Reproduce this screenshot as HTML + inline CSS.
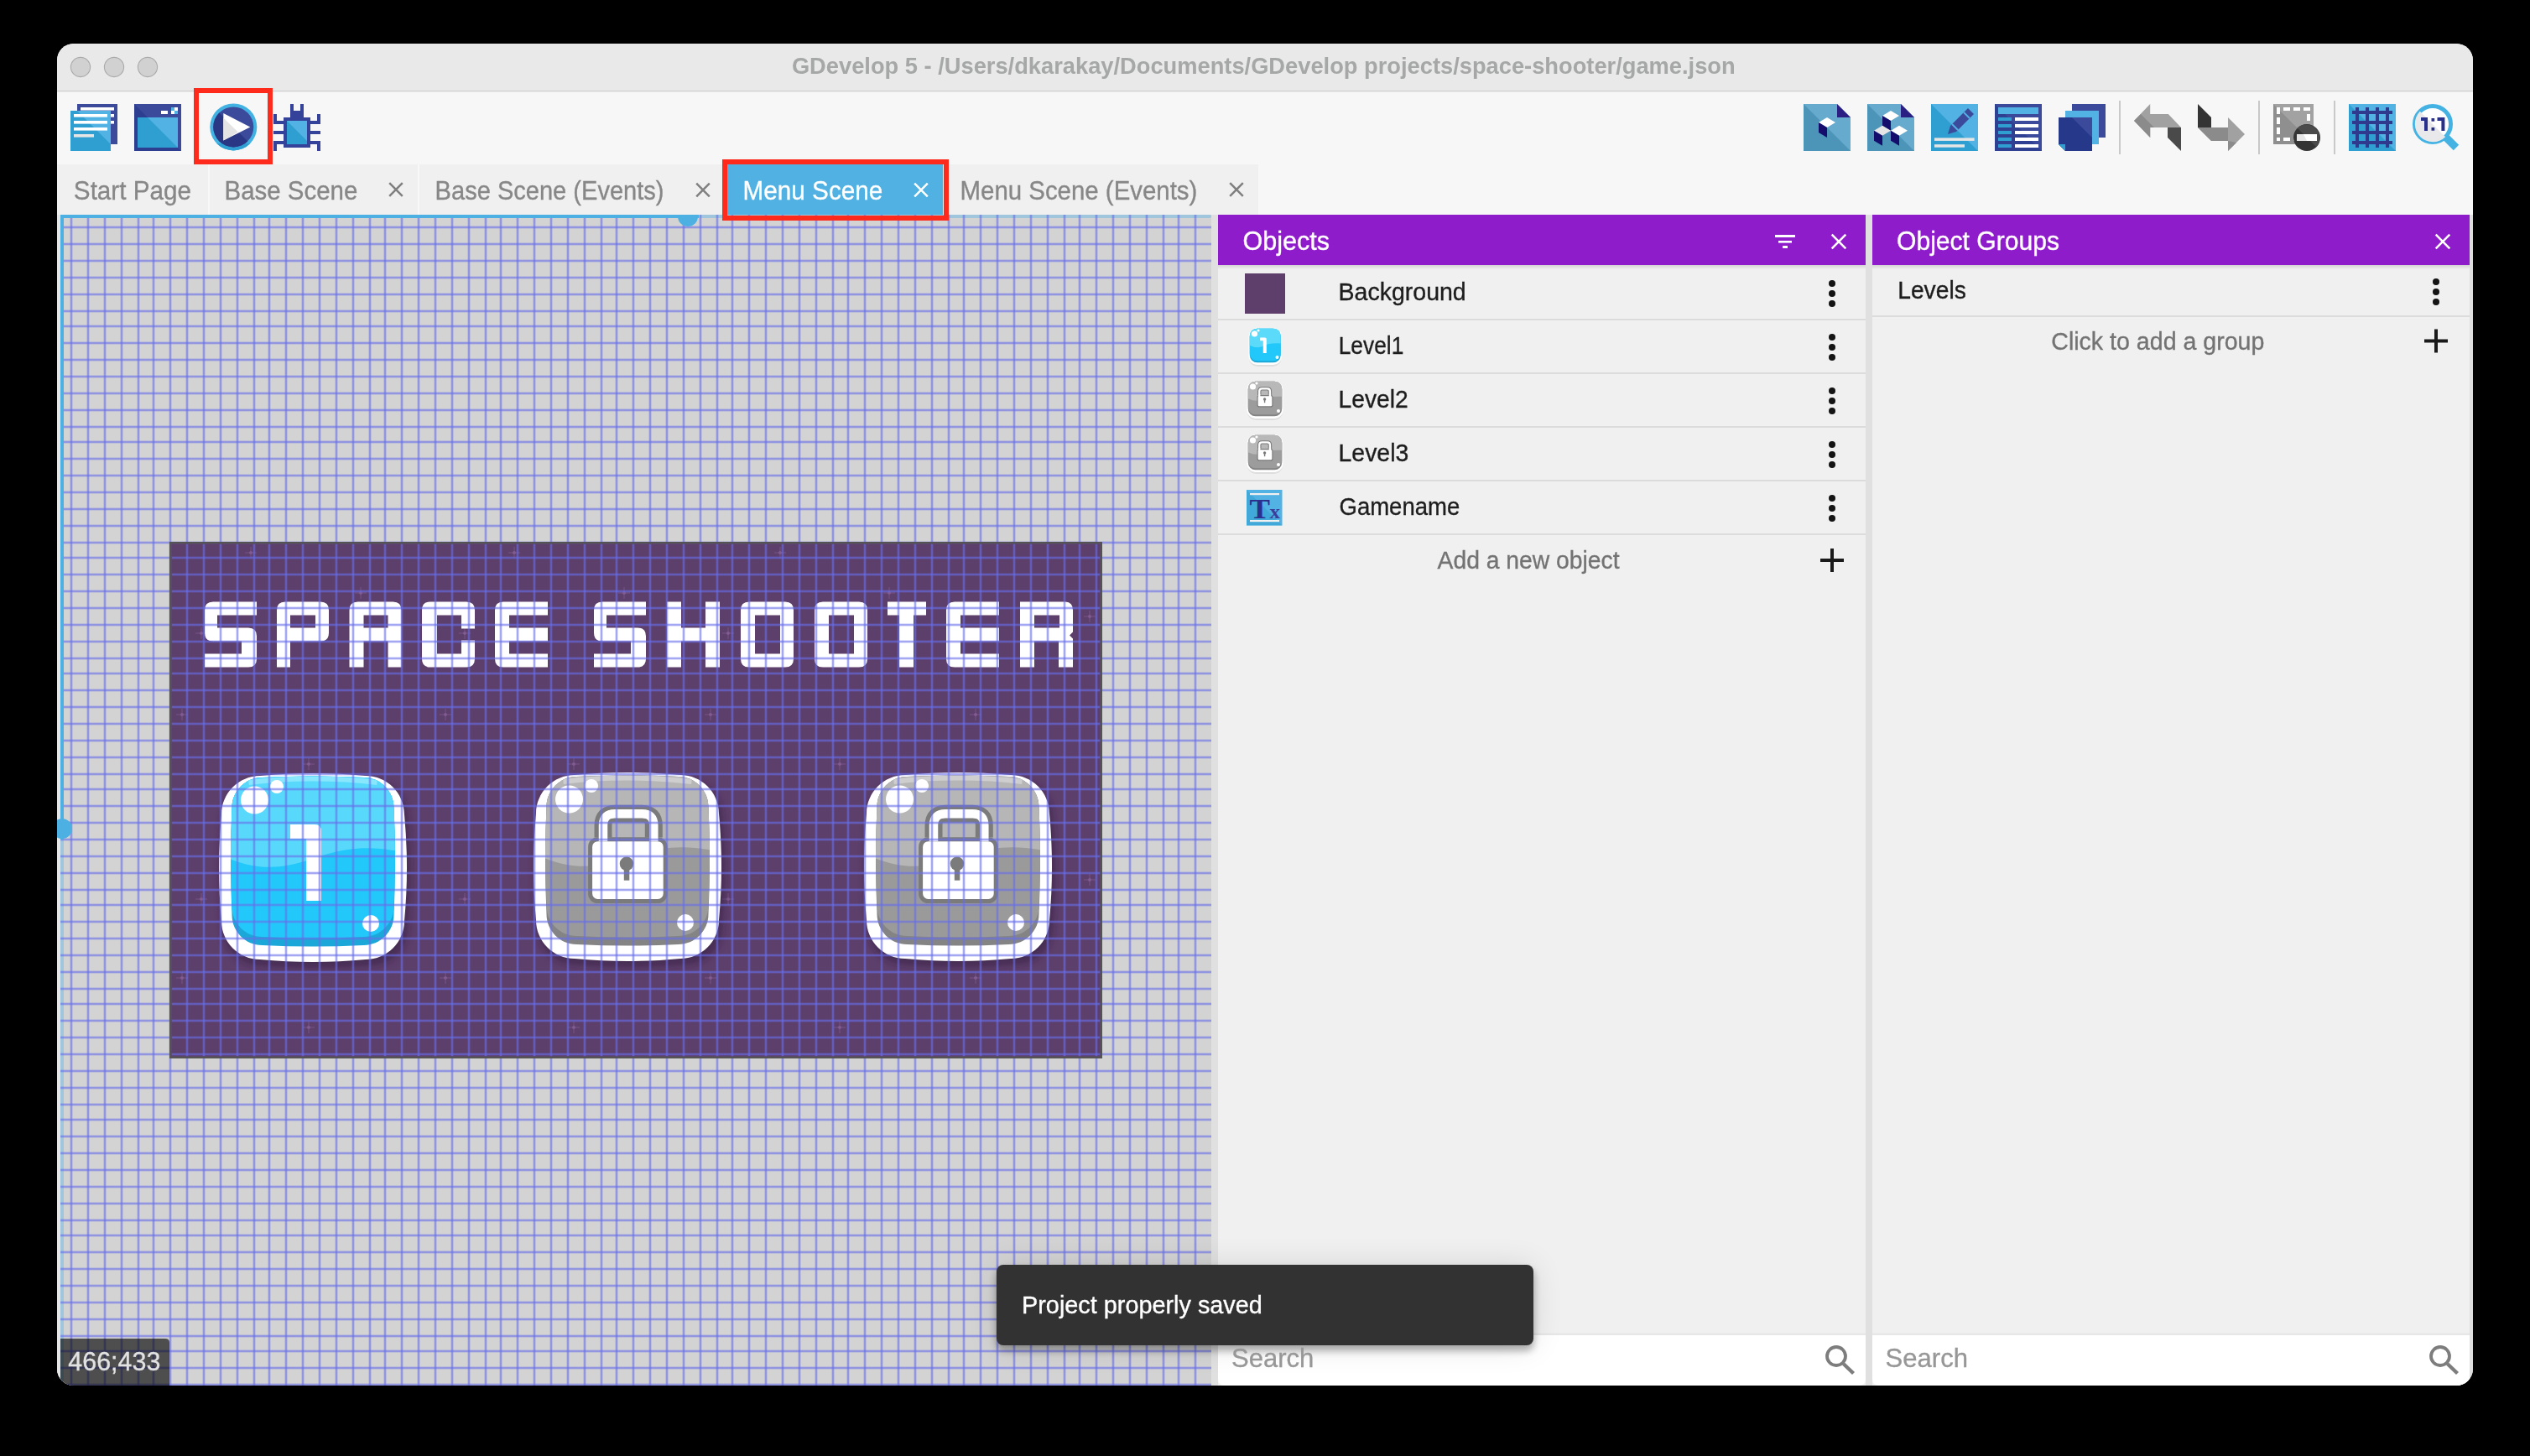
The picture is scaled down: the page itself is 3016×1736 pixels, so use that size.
<!DOCTYPE html>
<html><head><meta charset="utf-8"><title>GDevelop 5</title>
<style>
html,body{margin:0;padding:0;background:#000;width:3016px;height:1736px;overflow:hidden}
svg{position:absolute;left:0;top:0;display:block}
svg text{font-family:"Liberation Sans",sans-serif}
.tx{will-change:transform}
#toast{position:absolute;left:1188px;top:1508px;width:640px;height:96px;background:#323232;border-radius:8px;
box-shadow:0 6px 10px rgba(0,0,0,0.14),0 1px 36px rgba(0,0,0,0.12),0 6px 10px rgba(0,0,0,0.2)}
</style></head>
<body>
<svg width="3016" height="1736" viewBox="0 0 3016 1736">
<defs><clipPath id="win"><rect x="68" y="52" width="2880" height="1600" rx="20" ry="20"/></clipPath></defs>
<rect width="3016" height="1736" fill="#000"/>
<g clip-path="url(#win)">
<rect x="68" y="52" width="2880" height="1600" fill="#efefef"/>
<rect x="68" y="52" width="2880" height="57" fill="#e8e9e8"/>
<rect x="68" y="108" width="2880" height="1.5" fill="#cfcfcf"/>
<circle cx="96" cy="80" r="11.6" fill="#d0d1d0" stroke="#aaaaaa" stroke-width="1.1"/>
<circle cx="136" cy="80" r="11.6" fill="#d0d1d0" stroke="#aaaaaa" stroke-width="1.1"/>
<circle cx="176" cy="80" r="11.6" fill="#d0d1d0" stroke="#aaaaaa" stroke-width="1.1"/>
<rect x="68" y="109.5" width="2880" height="146.5" fill="#f7f7f7"/>
<rect x="68" y="196" width="1432" height="60" fill="#f0f0f0"/>
<rect x="248" y="196" width="2" height="60" fill="#f8f8f8"/>
<rect x="498" y="196" width="2" height="60" fill="#f8f8f8"/>
<rect x="867" y="196" width="257" height="60" fill="#50b1e2"/>
<path d="M464.2,218.2L479.8,233.8M479.8,218.2L464.2,233.8" stroke="#808080" stroke-width="2.5" fill="none"/>
<path d="M830.2,218.7L845.8,234.3M845.8,218.7L830.2,234.3" stroke="#808080" stroke-width="2.5" fill="none"/>
<path d="M1090.2,218.7L1105.8,234.3M1105.8,218.7L1090.2,234.3" stroke="#ffffff" stroke-width="2.5" fill="none"/>
<path d="M1466.2,218.2L1481.8,233.8M1481.8,218.2L1466.2,233.8" stroke="#808080" stroke-width="2.5" fill="none"/>
<clipPath id="cv"><rect x="68" y="256" width="1376" height="1396"/></clipPath>
<g clip-path="url(#cv)">
<rect x="68" y="256" width="1376" height="1396" fill="#d3d3d3"/>
<rect x="68" y="256" width="4" height="1396" fill="#e6e6e6"/>
<rect x="202" y="646" width="1112" height="616" fill="#5d3f6b"/>
<defs><filter id="bshadow" x="-20%" y="-20%" width="140%" height="140%"><feGaussianBlur stdDeviation="5"/></filter></defs>
<path d="M292,659H306M299,652V666" stroke="#9a6fb0" stroke-width="1.5" opacity="0.28"/><circle cx="299" cy="659" r="2" fill="#a77cc0" opacity="0.35"/>
<path d="M606,659H620M613,652V666" stroke="#9a6fb0" stroke-width="1.5" opacity="0.28"/><circle cx="613" cy="659" r="2" fill="#a77cc0" opacity="0.35"/>
<path d="M923,659H937M930,652V666" stroke="#9a6fb0" stroke-width="1.5" opacity="0.28"/><circle cx="930" cy="659" r="2" fill="#a77cc0" opacity="0.35"/>
<path d="M423,707H437M430,700V714" stroke="#9a6fb0" stroke-width="1.5" opacity="0.28"/><circle cx="430" cy="707" r="2" fill="#a77cc0" opacity="0.35"/>
<path d="M737,707H751M744,700V714" stroke="#9a6fb0" stroke-width="1.5" opacity="0.28"/><circle cx="744" cy="707" r="2" fill="#a77cc0" opacity="0.35"/>
<path d="M1053,707H1067M1060,700V714" stroke="#9a6fb0" stroke-width="1.5" opacity="0.28"/><circle cx="1060" cy="707" r="2" fill="#a77cc0" opacity="0.35"/>
<path d="M233,755H247M240,748V762" stroke="#9a6fb0" stroke-width="1.5" opacity="0.28"/><circle cx="240" cy="755" r="2" fill="#a77cc0" opacity="0.35"/>
<path d="M547,755H561M554,748V762" stroke="#9a6fb0" stroke-width="1.5" opacity="0.28"/><circle cx="554" cy="755" r="2" fill="#a77cc0" opacity="0.35"/>
<path d="M861,755H875M868,748V762" stroke="#9a6fb0" stroke-width="1.5" opacity="0.28"/><circle cx="868" cy="755" r="2" fill="#a77cc0" opacity="0.35"/>
<path d="M1292,735H1306M1299,728V742" stroke="#9a6fb0" stroke-width="1.5" opacity="0.28"/><circle cx="1299" cy="735" r="2" fill="#a77cc0" opacity="0.35"/>
<path d="M210,852H224M217,845V859" stroke="#9a6fb0" stroke-width="1.5" opacity="0.28"/><circle cx="217" cy="852" r="2" fill="#a77cc0" opacity="0.35"/>
<path d="M524,852H538M531,845V859" stroke="#9a6fb0" stroke-width="1.5" opacity="0.28"/><circle cx="531" cy="852" r="2" fill="#a77cc0" opacity="0.35"/>
<path d="M840,852H854M847,845V859" stroke="#9a6fb0" stroke-width="1.5" opacity="0.28"/><circle cx="847" cy="852" r="2" fill="#a77cc0" opacity="0.35"/>
<path d="M1156,852H1170M1163,845V859" stroke="#9a6fb0" stroke-width="1.5" opacity="0.28"/><circle cx="1163" cy="852" r="2" fill="#a77cc0" opacity="0.35"/>
<path d="M361,911H375M368,904V918" stroke="#9a6fb0" stroke-width="1.5" opacity="0.28"/><circle cx="368" cy="911" r="2" fill="#a77cc0" opacity="0.35"/>
<path d="M677,911H691M684,904V918" stroke="#9a6fb0" stroke-width="1.5" opacity="0.28"/><circle cx="684" cy="911" r="2" fill="#a77cc0" opacity="0.35"/>
<path d="M994,911H1008M1001,904V918" stroke="#9a6fb0" stroke-width="1.5" opacity="0.28"/><circle cx="1001" cy="911" r="2" fill="#a77cc0" opacity="0.35"/>
<path d="M233,1072H247M240,1065V1079" stroke="#9a6fb0" stroke-width="1.5" opacity="0.28"/><circle cx="240" cy="1072" r="2" fill="#a77cc0" opacity="0.35"/>
<path d="M547,1072H561M554,1065V1079" stroke="#9a6fb0" stroke-width="1.5" opacity="0.28"/><circle cx="554" cy="1072" r="2" fill="#a77cc0" opacity="0.35"/>
<path d="M861,1072H875M868,1065V1079" stroke="#9a6fb0" stroke-width="1.5" opacity="0.28"/><circle cx="868" cy="1072" r="2" fill="#a77cc0" opacity="0.35"/>
<path d="M1292,1049H1306M1299,1042V1056" stroke="#9a6fb0" stroke-width="1.5" opacity="0.28"/><circle cx="1299" cy="1049" r="2" fill="#a77cc0" opacity="0.35"/>
<path d="M210,1166H224M217,1159V1173" stroke="#9a6fb0" stroke-width="1.5" opacity="0.28"/><circle cx="217" cy="1166" r="2" fill="#a77cc0" opacity="0.35"/>
<path d="M524,1166H538M531,1159V1173" stroke="#9a6fb0" stroke-width="1.5" opacity="0.28"/><circle cx="531" cy="1166" r="2" fill="#a77cc0" opacity="0.35"/>
<path d="M840,1166H854M847,1159V1173" stroke="#9a6fb0" stroke-width="1.5" opacity="0.28"/><circle cx="847" cy="1166" r="2" fill="#a77cc0" opacity="0.35"/>
<path d="M1156,1166H1170M1163,1159V1173" stroke="#9a6fb0" stroke-width="1.5" opacity="0.28"/><circle cx="1163" cy="1166" r="2" fill="#a77cc0" opacity="0.35"/>
<path d="M361,1225H375M368,1218V1232" stroke="#9a6fb0" stroke-width="1.5" opacity="0.28"/><circle cx="368" cy="1225" r="2" fill="#a77cc0" opacity="0.35"/>
<path d="M677,1225H691M684,1218V1232" stroke="#9a6fb0" stroke-width="1.5" opacity="0.28"/><circle cx="684" cy="1225" r="2" fill="#a77cc0" opacity="0.35"/>
<path d="M994,1225H1008M1001,1218V1232" stroke="#9a6fb0" stroke-width="1.5" opacity="0.28"/><circle cx="1001" cy="1225" r="2" fill="#a77cc0" opacity="0.35"/>
<path transform="translate(244,717.5)" d="M0.00,10.00Q0.00,0.00 10.00,0.00L62.00,0.00L62.00,16.00L15.00,16.00L15.00,31.00L52.00,31.00Q62.00,31.00 62.00,41.00L62.00,68.00Q62.00,78.00 52.00,78.00L0.00,78.00L0.00,62.00L44.00,62.00L44.00,47.00L10.00,47.00Q0.00,47.00 0.00,37.00Z" fill="#ffffff" fill-rule="evenodd"/>
<path transform="translate(330,717.5)" d="M0.00,10.00Q0.00,0.00 10.00,0.00L52.00,0.00Q62.00,0.00 62.00,10.00L62.00,37.00Q62.00,47.00 52.00,47.00L16.00,47.00L16.00,78.00L0.00,78.00ZM16,16V31H46V16Z" fill="#ffffff" fill-rule="evenodd"/>
<path transform="translate(416.5,717.5)" d="M0.00,10.00Q0.00,0.00 10.00,0.00L52.00,0.00Q62.00,0.00 62.00,10.00L62.00,78.00L46.00,78.00L46.00,47.00L17.00,47.00L17.00,78.00L0.00,78.00ZM17,16V31H46V16Z" fill="#ffffff" fill-rule="evenodd"/>
<path transform="translate(503,717.5)" d="M0.00,10.00Q0.00,0.00 10.00,0.00L53.00,0.00Q63.00,0.00 63.00,10.00L63.00,32.00L47.00,32.00L47.00,16.00L18.00,16.00L18.00,62.00L47.00,62.00L47.00,46.00L63.00,46.00L63.00,68.00Q63.00,78.00 53.00,78.00L10.00,78.00Q0.00,78.00 0.00,68.00Z" fill="#ffffff" fill-rule="evenodd"/>
<path transform="translate(590,717.5)" d="M0.00,10.00Q0.00,0.00 10.00,0.00L63.00,0.00L63.00,16.00L17.00,16.00L17.00,31.00L63.00,31.00L63.00,47.00L17.00,47.00L17.00,62.00L63.00,62.00L63.00,78.00L10.00,78.00Q0.00,78.00 0.00,68.00Z" fill="#ffffff" fill-rule="evenodd"/>
<path transform="translate(708,717.5)" d="M0.00,10.00Q0.00,0.00 10.00,0.00L62.00,0.00L62.00,16.00L15.00,16.00L15.00,31.00L52.00,31.00Q62.00,31.00 62.00,41.00L62.00,68.00Q62.00,78.00 52.00,78.00L0.00,78.00L0.00,62.00L44.00,62.00L44.00,47.00L10.00,47.00Q0.00,47.00 0.00,37.00Z" fill="#ffffff" fill-rule="evenodd"/>
<path transform="translate(795,717.5)" d="M0.00,0.00L17.00,0.00L17.00,31.00L46.00,31.00L46.00,0.00L63.00,0.00L63.00,78.00L46.00,78.00L46.00,47.00L17.00,47.00L17.00,78.00L0.00,78.00Z" fill="#ffffff" fill-rule="evenodd"/>
<path transform="translate(883,717.5)" d="M0.00,10.00Q0.00,0.00 10.00,0.00L53.00,0.00Q63.00,0.00 63.00,10.00L63.00,68.00Q63.00,78.00 53.00,78.00L10.00,78.00Q0.00,78.00 0.00,68.00ZM17,16V62H47V16Z" fill="#ffffff" fill-rule="evenodd"/>
<path transform="translate(971,717.5)" d="M0.00,10.00Q0.00,0.00 10.00,0.00L53.00,0.00Q63.00,0.00 63.00,10.00L63.00,68.00Q63.00,78.00 53.00,78.00L10.00,78.00Q0.00,78.00 0.00,68.00ZM17,16V62H47V16Z" fill="#ffffff" fill-rule="evenodd"/>
<path transform="translate(1058,717.5)" d="M0.00,0.00L46.00,0.00L46.00,16.00L31.00,16.00L31.00,78.00L14.00,78.00L14.00,16.00L0.00,16.00Z" fill="#ffffff" fill-rule="evenodd"/>
<path transform="translate(1128,717.5)" d="M0.00,10.00Q0.00,0.00 10.00,0.00L63.00,0.00L63.00,16.00L17.00,16.00L17.00,31.00L63.00,31.00L63.00,47.00L17.00,47.00L17.00,62.00L63.00,62.00L63.00,78.00L10.00,78.00Q0.00,78.00 0.00,68.00Z" fill="#ffffff" fill-rule="evenodd"/>
<path transform="translate(1216,717.5)" d="M0.00,0.00L53.00,0.00Q63.00,0.00 63.00,10.00L63.00,36.00L59.00,40.00L63.00,44.00L63.00,78.00L46.00,78.00L46.00,47.00L17.00,47.00L17.00,78.00L0.00,78.00ZM17,16V31H47V16Z" fill="#ffffff" fill-rule="evenodd"/>
<path d="M310,931C354.0,927 398.0,927 442,931C466.2,931 486,950.8 486,975C490,1019.0 490,1063.0 486,1107C486,1131.2 466.2,1151 442,1151C398.0,1155 354.0,1155 310,1151C285.8,1151 266,1131.2 266,1107C262,1063.0 262,1019.0 266,975C266,950.8 285.8,931 310,931Z" fill="#2a1836" opacity="0.45" filter="url(#bshadow)"/>
<path d="M310,925C352.0,921 394.0,921 436,925C461.3,925 482,945.7 482,971C486,1013.3333333333334 486,1055.6666666666667 482,1098C482,1123.3 461.3,1144 436,1144C394.0,1148 352.0,1148 310,1144C284.7,1144 264,1123.3 264,1098C260,1055.6666666666667 260,1013.3333333333334 264,971C264,945.7 284.7,925 310,925Z" fill="#ffffff"/>
<clipPath id="bc1"><path d="M312.5,927C352.8333333333333,925 393.1666666666667,925 433.5,927C453.3,927 469.5,943.2 469.5,963C471.5,1005.6666666666666 471.5,1048.3333333333333 469.5,1091C469.5,1110.8 453.3,1127 433.5,1127C393.1666666666667,1129 352.8333333333333,1129 312.5,1127C292.7,1127 276.5,1110.8 276.5,1091C274.5,1048.3333333333333 274.5,1005.6666666666666 276.5,963C276.5,943.2 292.7,927 312.5,927Z"/></clipPath>
<g clip-path="url(#bc1)">
<rect x="271.5" y="922" width="203.0" height="210" fill="#1ba8d8"/>
<path d="M312.5,923C352.8333333333333,921 393.1666666666667,921 433.5,923C453.3,923 469.5,939.2 469.5,959C471.5,999.6666666666666 471.5,1040.3333333333333 469.5,1081C469.5,1100.8 453.3,1117 433.5,1117C393.1666666666667,1119 352.8333333333333,1119 312.5,1117C292.7,1117 276.5,1100.8 276.5,1081C274.5,1040.3333333333333 274.5,999.6666666666666 276.5,959C276.5,939.2 292.7,923 312.5,923Z" fill="#22c8f9"/>
<path d="M271.5,922H474.5V1015C432,1007 404,1013 369,1025C334,1037 304,1037 271.5,1023Z" fill="#58d9fb"/>
<path d="M296.5,933C344,927 402,927 449.5,933" stroke="#a8f0ff" stroke-width="6" fill="none" opacity="0.6"/>
</g>
<circle cx="303.5" cy="954" r="16.5" fill="#ffffff"/>
<circle cx="330" cy="938" r="8" fill="#ffffff"/>
<circle cx="442" cy="1101" r="10" fill="#ffffff"/>
<path d="M346,983H375Q383,983 383,991V1074H365V1000H346Z" fill="#ffffff"/>
<path d="M685,930C729.0,926 773.0,926 817,930C841.2,930 861,949.8 861,974C865,1018.0 865,1062.0 861,1106C861,1130.2 841.2,1150 817,1150C773.0,1154 729.0,1154 685,1150C660.8,1150 641,1130.2 641,1106C637,1062.0 637,1018.0 641,974C641,949.8 660.8,930 685,930Z" fill="#2a1836" opacity="0.45" filter="url(#bshadow)"/>
<path d="M685,924C727.0,920 769.0,920 811,924C836.3,924 857,944.7 857,970C861,1012.3333333333334 861,1054.6666666666667 857,1097C857,1122.3 836.3,1143 811,1143C769.0,1147 727.0,1147 685,1143C659.7,1143 639,1122.3 639,1097C635,1054.6666666666667 635,1012.3333333333334 639,970C639,944.7 659.7,924 685,924Z" fill="#ffffff"/>
<clipPath id="bc2"><path d="M687.5,926C727.8333333333334,924 768.1666666666666,924 808.5,926C828.3,926 844.5,942.2 844.5,962C846.5,1004.6666666666666 846.5,1047.3333333333333 844.5,1090C844.5,1109.8 828.3,1126 808.5,1126C768.1666666666666,1128 727.8333333333334,1128 687.5,1126C667.7,1126 651.5,1109.8 651.5,1090C649.5,1047.3333333333333 649.5,1004.6666666666666 651.5,962C651.5,942.2 667.7,926 687.5,926Z"/></clipPath>
<g clip-path="url(#bc2)">
<rect x="646.5" y="921" width="203.0" height="210" fill="#848484"/>
<path d="M687.5,922C727.8333333333334,920 768.1666666666666,920 808.5,922C828.3,922 844.5,938.2 844.5,958C846.5,998.6666666666666 846.5,1039.3333333333333 844.5,1080C844.5,1099.8 828.3,1116 808.5,1116C768.1666666666666,1118 727.8333333333334,1118 687.5,1116C667.7,1116 651.5,1099.8 651.5,1080C649.5,1039.3333333333333 649.5,998.6666666666666 651.5,958C651.5,938.2 667.7,922 687.5,922Z" fill="#9a9a9a"/>
<path d="M646.5,921H849.5V1014C807,1006 779,1012 744,1024C709,1036 679,1036 646.5,1022Z" fill="#b6b6b6"/>
<path d="M671.5,932C719,926 777,926 824.5,932" stroke="#dedede" stroke-width="6" fill="none" opacity="0.6"/>
</g>
<circle cx="678.5" cy="953" r="16.5" fill="#ffffff"/>
<circle cx="705" cy="937" r="8" fill="#ffffff"/>
<circle cx="817" cy="1100" r="10" fill="#ffffff"/>
<rect x="703.6" y="1000.7" width="89.6" height="73.8" rx="9" fill="#ffffff" stroke="#7b7b7b" stroke-width="5"/>
<path d="M719,998.5V984.2Q719,970.2 733,970.2H765.3Q779.3,970.2 779.3,984.2V998.5" stroke="#7b7b7b" stroke-width="21" fill="none"/>
<path d="M719,1003V984.2Q719,970.2 733,970.2H765.3Q779.3,970.2 779.3,984.2V1003" stroke="#ffffff" stroke-width="10.5" fill="none"/>
<circle cx="747" cy="1029.8" r="8.3" fill="#7b7b7b"/><rect x="743.8" y="1030" width="6.5" height="19.7" fill="#7b7b7b"/>
<path d="M1079,930C1123.0,926 1167.0,926 1211,930C1235.2,930 1255,949.8 1255,974C1259,1018.0 1259,1062.0 1255,1106C1255,1130.2 1235.2,1150 1211,1150C1167.0,1154 1123.0,1154 1079,1150C1054.8,1150 1035,1130.2 1035,1106C1031,1062.0 1031,1018.0 1035,974C1035,949.8 1054.8,930 1079,930Z" fill="#2a1836" opacity="0.45" filter="url(#bshadow)"/>
<path d="M1079,924C1121.0,920 1163.0,920 1205,924C1230.3,924 1251,944.7 1251,970C1255,1012.3333333333334 1255,1054.6666666666667 1251,1097C1251,1122.3 1230.3,1143 1205,1143C1163.0,1147 1121.0,1147 1079,1143C1053.7,1143 1033,1122.3 1033,1097C1029,1054.6666666666667 1029,1012.3333333333334 1033,970C1033,944.7 1053.7,924 1079,924Z" fill="#ffffff"/>
<clipPath id="bc3"><path d="M1081.5,926C1121.8333333333333,924 1162.1666666666667,924 1202.5,926C1222.3,926 1238.5,942.2 1238.5,962C1240.5,1004.6666666666666 1240.5,1047.3333333333333 1238.5,1090C1238.5,1109.8 1222.3,1126 1202.5,1126C1162.1666666666667,1128 1121.8333333333333,1128 1081.5,1126C1061.7,1126 1045.5,1109.8 1045.5,1090C1043.5,1047.3333333333333 1043.5,1004.6666666666666 1045.5,962C1045.5,942.2 1061.7,926 1081.5,926Z"/></clipPath>
<g clip-path="url(#bc3)">
<rect x="1040.5" y="921" width="203.0" height="210" fill="#848484"/>
<path d="M1081.5,922C1121.8333333333333,920 1162.1666666666667,920 1202.5,922C1222.3,922 1238.5,938.2 1238.5,958C1240.5,998.6666666666666 1240.5,1039.3333333333333 1238.5,1080C1238.5,1099.8 1222.3,1116 1202.5,1116C1162.1666666666667,1118 1121.8333333333333,1118 1081.5,1116C1061.7,1116 1045.5,1099.8 1045.5,1080C1043.5,1039.3333333333333 1043.5,998.6666666666666 1045.5,958C1045.5,938.2 1061.7,922 1081.5,922Z" fill="#9a9a9a"/>
<path d="M1040.5,921H1243.5V1014C1201,1006 1173,1012 1138,1024C1103,1036 1073,1036 1040.5,1022Z" fill="#b6b6b6"/>
<path d="M1065.5,932C1113,926 1171,926 1218.5,932" stroke="#dedede" stroke-width="6" fill="none" opacity="0.6"/>
</g>
<circle cx="1072.5" cy="953" r="16.5" fill="#ffffff"/>
<circle cx="1099" cy="937" r="8" fill="#ffffff"/>
<circle cx="1211" cy="1100" r="10" fill="#ffffff"/>
<rect x="1097.6" y="1000.7" width="89.6" height="73.8" rx="9" fill="#ffffff" stroke="#7b7b7b" stroke-width="5"/>
<path d="M1113,998.5V984.2Q1113,970.2 1127,970.2H1159.3Q1173.3,970.2 1173.3,984.2V998.5" stroke="#7b7b7b" stroke-width="21" fill="none"/>
<path d="M1113,1003V984.2Q1113,970.2 1127,970.2H1159.3Q1173.3,970.2 1173.3,984.2V1003" stroke="#ffffff" stroke-width="10.5" fill="none"/>
<circle cx="1141" cy="1029.8" r="8.3" fill="#7b7b7b"/><rect x="1137.8" y="1030" width="6.5" height="19.7" fill="#7b7b7b"/>
<rect x="833" y="256" width="611" height="4" rx="2" fill="#9fc6dc"/>
<rect x="72" y="1001" width="4" height="660" fill="#9fc6dc"/>
<path d="M84,256h2V1652h-2ZM104,256h2V1652h-2ZM124,256h2V1652h-2ZM144,256h2V1652h-2ZM164,256h2V1652h-2ZM182,256h2V1652h-2ZM202,256h2V1652h-2ZM222,256h2V1652h-2ZM242,256h2V1652h-2ZM262,256h2V1652h-2ZM282,256h2V1652h-2ZM302,256h2V1652h-2ZM320,256h2V1652h-2ZM340,256h2V1652h-2ZM360,256h2V1652h-2ZM380,256h2V1652h-2ZM400,256h2V1652h-2ZM420,256h2V1652h-2ZM440,256h2V1652h-2ZM458,256h2V1652h-2ZM478,256h2V1652h-2ZM498,256h2V1652h-2ZM518,256h2V1652h-2ZM538,256h2V1652h-2ZM558,256h2V1652h-2ZM578,256h2V1652h-2ZM596,256h2V1652h-2ZM616,256h2V1652h-2ZM636,256h2V1652h-2ZM656,256h2V1652h-2ZM676,256h2V1652h-2ZM696,256h2V1652h-2ZM716,256h2V1652h-2ZM734,256h2V1652h-2ZM754,256h2V1652h-2ZM774,256h2V1652h-2ZM794,256h2V1652h-2ZM814,256h2V1652h-2ZM834,256h2V1652h-2ZM854,256h2V1652h-2ZM872,256h2V1652h-2ZM892,256h2V1652h-2ZM912,256h2V1652h-2ZM932,256h2V1652h-2ZM952,256h2V1652h-2ZM972,256h2V1652h-2ZM992,256h2V1652h-2ZM1010,256h2V1652h-2ZM1030,256h2V1652h-2ZM1050,256h2V1652h-2ZM1070,256h2V1652h-2ZM1090,256h2V1652h-2ZM1110,256h2V1652h-2ZM1130,256h2V1652h-2ZM1148,256h2V1652h-2ZM1168,256h2V1652h-2ZM1188,256h2V1652h-2ZM1208,256h2V1652h-2ZM1228,256h2V1652h-2ZM1248,256h2V1652h-2ZM1268,256h2V1652h-2ZM1286,256h2V1652h-2ZM1306,256h2V1652h-2ZM1326,256h2V1652h-2ZM1346,256h2V1652h-2ZM1366,256h2V1652h-2ZM1386,256h2V1652h-2ZM1404,256h2V1652h-2ZM1424,256h2V1652h-2Z" fill="rgb(104,110,235)" fill-opacity="0.6"/>
<path d="M83,256h1V1652h-1Z M86,256h1V1652h-1ZM103,256h1V1652h-1Z M106,256h1V1652h-1ZM123,256h1V1652h-1Z M126,256h1V1652h-1ZM143,256h1V1652h-1Z M146,256h1V1652h-1ZM163,256h1V1652h-1Z M166,256h1V1652h-1ZM181,256h1V1652h-1Z M184,256h1V1652h-1ZM201,256h1V1652h-1Z M204,256h1V1652h-1ZM221,256h1V1652h-1Z M224,256h1V1652h-1ZM241,256h1V1652h-1Z M244,256h1V1652h-1ZM261,256h1V1652h-1Z M264,256h1V1652h-1ZM281,256h1V1652h-1Z M284,256h1V1652h-1ZM301,256h1V1652h-1Z M304,256h1V1652h-1ZM319,256h1V1652h-1Z M322,256h1V1652h-1ZM339,256h1V1652h-1Z M342,256h1V1652h-1ZM359,256h1V1652h-1Z M362,256h1V1652h-1ZM379,256h1V1652h-1Z M382,256h1V1652h-1ZM399,256h1V1652h-1Z M402,256h1V1652h-1ZM419,256h1V1652h-1Z M422,256h1V1652h-1ZM439,256h1V1652h-1Z M442,256h1V1652h-1ZM457,256h1V1652h-1Z M460,256h1V1652h-1ZM477,256h1V1652h-1Z M480,256h1V1652h-1ZM497,256h1V1652h-1Z M500,256h1V1652h-1ZM517,256h1V1652h-1Z M520,256h1V1652h-1ZM537,256h1V1652h-1Z M540,256h1V1652h-1ZM557,256h1V1652h-1Z M560,256h1V1652h-1ZM577,256h1V1652h-1Z M580,256h1V1652h-1ZM595,256h1V1652h-1Z M598,256h1V1652h-1ZM615,256h1V1652h-1Z M618,256h1V1652h-1ZM635,256h1V1652h-1Z M638,256h1V1652h-1ZM655,256h1V1652h-1Z M658,256h1V1652h-1ZM675,256h1V1652h-1Z M678,256h1V1652h-1ZM695,256h1V1652h-1Z M698,256h1V1652h-1ZM715,256h1V1652h-1Z M718,256h1V1652h-1ZM733,256h1V1652h-1Z M736,256h1V1652h-1ZM753,256h1V1652h-1Z M756,256h1V1652h-1ZM773,256h1V1652h-1Z M776,256h1V1652h-1ZM793,256h1V1652h-1Z M796,256h1V1652h-1ZM813,256h1V1652h-1Z M816,256h1V1652h-1ZM833,256h1V1652h-1Z M836,256h1V1652h-1ZM853,256h1V1652h-1Z M856,256h1V1652h-1ZM871,256h1V1652h-1Z M874,256h1V1652h-1ZM891,256h1V1652h-1Z M894,256h1V1652h-1ZM911,256h1V1652h-1Z M914,256h1V1652h-1ZM931,256h1V1652h-1Z M934,256h1V1652h-1ZM951,256h1V1652h-1Z M954,256h1V1652h-1ZM971,256h1V1652h-1Z M974,256h1V1652h-1ZM991,256h1V1652h-1Z M994,256h1V1652h-1ZM1009,256h1V1652h-1Z M1012,256h1V1652h-1ZM1029,256h1V1652h-1Z M1032,256h1V1652h-1ZM1049,256h1V1652h-1Z M1052,256h1V1652h-1ZM1069,256h1V1652h-1Z M1072,256h1V1652h-1ZM1089,256h1V1652h-1Z M1092,256h1V1652h-1ZM1109,256h1V1652h-1Z M1112,256h1V1652h-1ZM1129,256h1V1652h-1Z M1132,256h1V1652h-1ZM1147,256h1V1652h-1Z M1150,256h1V1652h-1ZM1167,256h1V1652h-1Z M1170,256h1V1652h-1ZM1187,256h1V1652h-1Z M1190,256h1V1652h-1ZM1207,256h1V1652h-1Z M1210,256h1V1652h-1ZM1227,256h1V1652h-1Z M1230,256h1V1652h-1ZM1247,256h1V1652h-1Z M1250,256h1V1652h-1ZM1267,256h1V1652h-1Z M1270,256h1V1652h-1ZM1285,256h1V1652h-1Z M1288,256h1V1652h-1ZM1305,256h1V1652h-1Z M1308,256h1V1652h-1ZM1325,256h1V1652h-1Z M1328,256h1V1652h-1ZM1345,256h1V1652h-1Z M1348,256h1V1652h-1ZM1365,256h1V1652h-1Z M1368,256h1V1652h-1ZM1385,256h1V1652h-1Z M1388,256h1V1652h-1ZM1403,256h1V1652h-1Z M1406,256h1V1652h-1ZM1423,256h1V1652h-1Z M1426,256h1V1652h-1Z" fill="rgb(104,110,235)" fill-opacity="0.2"/>
<path d="M72,250H1444v2H72ZM72,270H1444v2H72ZM72,290H1444v2H72ZM72,310H1444v2H72ZM72,330H1444v2H72ZM72,350H1444v2H72ZM72,370H1444v2H72ZM72,388H1444v2H72ZM72,408H1444v2H72ZM72,428H1444v2H72ZM72,448H1444v2H72ZM72,468H1444v2H72ZM72,488H1444v2H72ZM72,508H1444v2H72ZM72,526H1444v2H72ZM72,546H1444v2H72ZM72,566H1444v2H72ZM72,586H1444v2H72ZM72,606H1444v2H72ZM72,626H1444v2H72ZM72,646H1444v2H72ZM72,664H1444v2H72ZM72,684H1444v2H72ZM72,704H1444v2H72ZM72,724H1444v2H72ZM72,744H1444v2H72ZM72,764H1444v2H72ZM72,784H1444v2H72ZM72,802H1444v2H72ZM72,822H1444v2H72ZM72,842H1444v2H72ZM72,862H1444v2H72ZM72,882H1444v2H72ZM72,902H1444v2H72ZM72,922H1444v2H72ZM72,940H1444v2H72ZM72,960H1444v2H72ZM72,980H1444v2H72ZM72,1000H1444v2H72ZM72,1020H1444v2H72ZM72,1040H1444v2H72ZM72,1060H1444v2H72ZM72,1078H1444v2H72ZM72,1098H1444v2H72ZM72,1118H1444v2H72ZM72,1138H1444v2H72ZM72,1158H1444v2H72ZM72,1178H1444v2H72ZM72,1196H1444v2H72ZM72,1216H1444v2H72ZM72,1236H1444v2H72ZM72,1256H1444v2H72ZM72,1276H1444v2H72ZM72,1296H1444v2H72ZM72,1316H1444v2H72ZM72,1334H1444v2H72ZM72,1354H1444v2H72ZM72,1374H1444v2H72ZM72,1394H1444v2H72ZM72,1414H1444v2H72ZM72,1434H1444v2H72ZM72,1454H1444v2H72ZM72,1472H1444v2H72ZM72,1492H1444v2H72ZM72,1512H1444v2H72ZM72,1532H1444v2H72ZM72,1552H1444v2H72ZM72,1572H1444v2H72ZM72,1592H1444v2H72ZM72,1610H1444v2H72ZM72,1630H1444v2H72ZM72,1650H1444v2H72Z" fill="rgb(104,110,235)" fill-opacity="0.6"/>
<path d="M72,249H1444v1H72Z M72,252H1444v1H72ZM72,269H1444v1H72Z M72,272H1444v1H72ZM72,289H1444v1H72Z M72,292H1444v1H72ZM72,309H1444v1H72Z M72,312H1444v1H72ZM72,329H1444v1H72Z M72,332H1444v1H72ZM72,349H1444v1H72Z M72,352H1444v1H72ZM72,369H1444v1H72Z M72,372H1444v1H72ZM72,387H1444v1H72Z M72,390H1444v1H72ZM72,407H1444v1H72Z M72,410H1444v1H72ZM72,427H1444v1H72Z M72,430H1444v1H72ZM72,447H1444v1H72Z M72,450H1444v1H72ZM72,467H1444v1H72Z M72,470H1444v1H72ZM72,487H1444v1H72Z M72,490H1444v1H72ZM72,507H1444v1H72Z M72,510H1444v1H72ZM72,525H1444v1H72Z M72,528H1444v1H72ZM72,545H1444v1H72Z M72,548H1444v1H72ZM72,565H1444v1H72Z M72,568H1444v1H72ZM72,585H1444v1H72Z M72,588H1444v1H72ZM72,605H1444v1H72Z M72,608H1444v1H72ZM72,625H1444v1H72Z M72,628H1444v1H72ZM72,645H1444v1H72Z M72,648H1444v1H72ZM72,663H1444v1H72Z M72,666H1444v1H72ZM72,683H1444v1H72Z M72,686H1444v1H72ZM72,703H1444v1H72Z M72,706H1444v1H72ZM72,723H1444v1H72Z M72,726H1444v1H72ZM72,743H1444v1H72Z M72,746H1444v1H72ZM72,763H1444v1H72Z M72,766H1444v1H72ZM72,783H1444v1H72Z M72,786H1444v1H72ZM72,801H1444v1H72Z M72,804H1444v1H72ZM72,821H1444v1H72Z M72,824H1444v1H72ZM72,841H1444v1H72Z M72,844H1444v1H72ZM72,861H1444v1H72Z M72,864H1444v1H72ZM72,881H1444v1H72Z M72,884H1444v1H72ZM72,901H1444v1H72Z M72,904H1444v1H72ZM72,921H1444v1H72Z M72,924H1444v1H72ZM72,939H1444v1H72Z M72,942H1444v1H72ZM72,959H1444v1H72Z M72,962H1444v1H72ZM72,979H1444v1H72Z M72,982H1444v1H72ZM72,999H1444v1H72Z M72,1002H1444v1H72ZM72,1019H1444v1H72Z M72,1022H1444v1H72ZM72,1039H1444v1H72Z M72,1042H1444v1H72ZM72,1059H1444v1H72Z M72,1062H1444v1H72ZM72,1077H1444v1H72Z M72,1080H1444v1H72ZM72,1097H1444v1H72Z M72,1100H1444v1H72ZM72,1117H1444v1H72Z M72,1120H1444v1H72ZM72,1137H1444v1H72Z M72,1140H1444v1H72ZM72,1157H1444v1H72Z M72,1160H1444v1H72ZM72,1177H1444v1H72Z M72,1180H1444v1H72ZM72,1195H1444v1H72Z M72,1198H1444v1H72ZM72,1215H1444v1H72Z M72,1218H1444v1H72ZM72,1235H1444v1H72Z M72,1238H1444v1H72ZM72,1255H1444v1H72Z M72,1258H1444v1H72ZM72,1275H1444v1H72Z M72,1278H1444v1H72ZM72,1295H1444v1H72Z M72,1298H1444v1H72ZM72,1315H1444v1H72Z M72,1318H1444v1H72ZM72,1333H1444v1H72Z M72,1336H1444v1H72ZM72,1353H1444v1H72Z M72,1356H1444v1H72ZM72,1373H1444v1H72Z M72,1376H1444v1H72ZM72,1393H1444v1H72Z M72,1396H1444v1H72ZM72,1413H1444v1H72Z M72,1416H1444v1H72ZM72,1433H1444v1H72Z M72,1436H1444v1H72ZM72,1453H1444v1H72Z M72,1456H1444v1H72ZM72,1471H1444v1H72Z M72,1474H1444v1H72ZM72,1491H1444v1H72Z M72,1494H1444v1H72ZM72,1511H1444v1H72Z M72,1514H1444v1H72ZM72,1531H1444v1H72Z M72,1534H1444v1H72ZM72,1551H1444v1H72Z M72,1554H1444v1H72ZM72,1571H1444v1H72Z M72,1574H1444v1H72ZM72,1591H1444v1H72Z M72,1594H1444v1H72ZM72,1609H1444v1H72Z M72,1612H1444v1H72ZM72,1629H1444v1H72Z M72,1632H1444v1H72ZM72,1649H1444v1H72Z M72,1652H1444v1H72Z" fill="rgb(104,110,235)" fill-opacity="0.2"/>
<rect x="203" y="647" width="1110" height="614" fill="none" stroke="#545454" stroke-width="2"/><rect x="204.5" y="648.5" width="1107" height="611" fill="none" stroke="#5a4866" stroke-opacity="0.8" stroke-width="1"/>
<rect x="72" y="256" width="761" height="4" fill="#4cb0e2"/>
<rect x="72" y="256" width="4" height="745" fill="#4cb0e2"/>
<circle cx="820" cy="258" r="12" fill="#4cb0e2"/>
<circle cx="74" cy="988" r="12" fill="#4cb0e2"/>
<path d="M72,1596H197Q202,1596 202,1601V1652H72Z" fill="rgba(0,0,0,0.63)"/>
</g>
<rect x="1444" y="256" width="8" height="1396" fill="#e0e0e0"/>
<rect x="2224" y="256" width="8" height="1396" fill="#e0e0e0"/>
<rect x="2944" y="256" width="4" height="1396" fill="#dedede"/>
<rect x="1452" y="256" width="772" height="1396" fill="#f0f0f0"/>
<rect x="2232" y="256" width="712" height="1396" fill="#f0f0f0"/>
<defs><linearGradient id="hs" x1="0" y1="0" x2="0" y2="1"><stop offset="0" stop-color="#000" stop-opacity="0.12"/><stop offset="1" stop-color="#000" stop-opacity="0"/></linearGradient></defs>
<rect x="1452" y="316" width="772" height="5" fill="url(#hs)"/>
<rect x="2232" y="316" width="712" height="5" fill="url(#hs)"/>
<rect x="1452" y="256" width="772" height="60" fill="#8e1ccb"/>
<rect x="2232" y="256" width="712" height="60" fill="#8e1ccb"/>
<rect x="2116" y="280" width="24" height="3" fill="#fff"/><rect x="2120" y="287" width="16" height="2.6" fill="#fff"/><rect x="2125" y="293" width="6" height="3" fill="#fff"/>
<path d="M2183.7,279.7L2200.3,296.3M2200.3,279.7L2183.7,296.3" stroke="#ffffff" stroke-width="2.6" fill="none"/>
<path d="M2903.7,279.7L2920.3,296.3M2920.3,279.7L2903.7,296.3" stroke="#ffffff" stroke-width="2.6" fill="none"/>
<rect x="1452" y="380" width="772" height="2" fill="#dcdcdc"/>
<circle cx="2184" cy="338" r="4" fill="#141414"/>
<circle cx="2184" cy="350" r="4" fill="#141414"/>
<circle cx="2184" cy="362" r="4" fill="#141414"/>
<rect x="1452" y="444" width="772" height="2" fill="#dcdcdc"/>
<circle cx="2184" cy="402" r="4" fill="#141414"/>
<circle cx="2184" cy="414" r="4" fill="#141414"/>
<circle cx="2184" cy="426" r="4" fill="#141414"/>
<rect x="1452" y="508" width="772" height="2" fill="#dcdcdc"/>
<circle cx="2184" cy="466" r="4" fill="#141414"/>
<circle cx="2184" cy="478" r="4" fill="#141414"/>
<circle cx="2184" cy="490" r="4" fill="#141414"/>
<rect x="1452" y="572" width="772" height="2" fill="#dcdcdc"/>
<circle cx="2184" cy="530" r="4" fill="#141414"/>
<circle cx="2184" cy="542" r="4" fill="#141414"/>
<circle cx="2184" cy="554" r="4" fill="#141414"/>
<rect x="1452" y="636" width="772" height="2" fill="#dcdcdc"/>
<circle cx="2184" cy="594" r="4" fill="#141414"/>
<circle cx="2184" cy="606" r="4" fill="#141414"/>
<circle cx="2184" cy="618" r="4" fill="#141414"/>
<path d="M2170,668H2198M2184,654V682" stroke="#1a1a1a" stroke-width="4" fill="none"/>
<rect x="2232" y="376" width="712" height="2" fill="#dcdcdc"/>
<circle cx="2904" cy="336" r="4" fill="#141414"/>
<circle cx="2904" cy="348" r="4" fill="#141414"/>
<circle cx="2904" cy="360" r="4" fill="#141414"/>
<path d="M2890,406.5H2918M2904,392.5V420.5" stroke="#1a1a1a" stroke-width="4" fill="none"/>
<rect x="1484" y="326" width="48" height="48" fill="#5e3f6b"/>
<rect x="1489.0" y="393.5" width="38.5" height="43.5" rx="10" fill="#dedede"/><rect x="1488.5" y="391" width="39.5" height="44" rx="10" fill="#ffffff"/><rect x="1489.8" y="391.8" width="36.9" height="40.5" rx="9" fill="#1ba7d6"/><rect x="1489.8" y="391.8" width="36.9" height="38.5" rx="9" fill="#22c8f9"/><path d="M1489.8,400.8Q1489.8,391.8 1498.8,391.8H1517.7Q1526.7,391.8 1526.7,400.8V409.4Q1512.2,408.48 1506.275,412.62Q1498.375,416.3 1489.8,411.7Z" fill="#5cdafa"/><circle cx="1495.5" cy="398" r="3.6" fill="#fff"/><circle cx="1500.0" cy="394" r="1.6" fill="#fff"/><circle cx="1522.5" cy="426" r="2" fill="#fff"/>
<path d="M1502.2,402.5H1507.8Q1509.8,402.5 1509.8,404.5V421H1505.8V406.3H1502.2Z" fill="#fff"/>
<rect x="1487.0" y="456.5" width="42" height="44.5" rx="10" fill="#dedede"/><rect x="1486.5" y="454" width="43" height="45" rx="10" fill="#ffffff"/><rect x="1487.8" y="454.8" width="40.4" height="41.5" rx="9" fill="#848484"/><rect x="1487.8" y="454.8" width="40.4" height="39.5" rx="9" fill="#9c9c9c"/><path d="M1487.8,463.8Q1487.8,454.8 1496.8,454.8H1519.2Q1528.2,454.8 1528.2,463.8V472.8Q1512.3,471.86 1505.85,476.09Q1497.25,479.85 1487.8,475.15Z" fill="#b8b8b8"/><circle cx="1493.5" cy="461" r="3.6" fill="#fff"/><circle cx="1498.0" cy="457" r="1.6" fill="#fff"/><circle cx="1524.0" cy="490" r="2" fill="#fff"/>
<path d="M1501.25,471V466.5Q1501.25,463.35 1504.4,463.35H1510.8Q1513.95,463.35 1513.95,466.5V471" stroke="#7a7a7a" stroke-width="4.4" fill="none"/>
<path d="M1501.25,472V466.5Q1501.25,463.35 1504.4,463.35H1510.8Q1513.95,463.35 1513.95,466.5V472" stroke="#fff" stroke-width="2.3" fill="none"/>
<rect x="1499.1" y="471.6" width="17.8" height="13.3" rx="2" fill="#fff" stroke="#7a7a7a" stroke-width="1.1"/>
<path d="M1501.25,473V470M1513.95,473V470" stroke="#fff" stroke-width="2.3"/>
<circle cx="1507.6" cy="476" r="1.7" fill="#7a7a7a"/><rect x="1506.9" y="476" width="1.4" height="4.2" fill="#7a7a7a"/>
<rect x="1487.0" y="520.5" width="42" height="44.5" rx="10" fill="#dedede"/><rect x="1486.5" y="518" width="43" height="45" rx="10" fill="#ffffff"/><rect x="1487.8" y="518.8" width="40.4" height="41.5" rx="9" fill="#848484"/><rect x="1487.8" y="518.8" width="40.4" height="39.5" rx="9" fill="#9c9c9c"/><path d="M1487.8,527.8Q1487.8,518.8 1496.8,518.8H1519.2Q1528.2,518.8 1528.2,527.8V536.8Q1512.3,535.86 1505.85,540.09Q1497.25,543.85 1487.8,539.15Z" fill="#b8b8b8"/><circle cx="1493.5" cy="525" r="3.6" fill="#fff"/><circle cx="1498.0" cy="521" r="1.6" fill="#fff"/><circle cx="1524.0" cy="554" r="2" fill="#fff"/>
<path d="M1501.25,535V530.5Q1501.25,527.35 1504.4,527.35H1510.8Q1513.95,527.35 1513.95,530.5V535" stroke="#7a7a7a" stroke-width="4.4" fill="none"/>
<path d="M1501.25,536V530.5Q1501.25,527.35 1504.4,527.35H1510.8Q1513.95,527.35 1513.95,530.5V536" stroke="#fff" stroke-width="2.3" fill="none"/>
<rect x="1499.1" y="535.6" width="17.8" height="13.3" rx="2" fill="#fff" stroke="#7a7a7a" stroke-width="1.1"/>
<path d="M1501.25,537V534M1513.95,537V534" stroke="#fff" stroke-width="2.3"/>
<circle cx="1507.6" cy="540" r="1.7" fill="#7a7a7a"/><rect x="1506.9" y="540" width="1.4" height="4.2" fill="#7a7a7a"/>
<rect x="1486" y="584" width="42.5" height="42.5" fill="#52b2e3"/>
<path d="M1486,584L1528.5,626.5H1486Z" fill="#2e9fd0" opacity="0.5"/>
<rect x="1490" y="588" width="35" height="2.2" fill="#f0f0f0"/><rect x="1490" y="620" width="35" height="2.2" fill="#f0f0f0"/>
<text x="1489.5" y="617.6" style="font-family:&quot;Liberation Serif&quot;" font-weight="bold" font-size="34" fill="#2c2f8c" textLength="24.5" lengthAdjust="spacingAndGlyphs">T</text>
<text x="1513.5" y="617.6" style="font-family:&quot;Liberation Serif&quot;" font-weight="bold" font-size="24" fill="#3a3f9c" textLength="12.5" lengthAdjust="spacingAndGlyphs">x</text>
<defs><linearGradient id="ss" x1="0" y1="0" x2="0" y2="1"><stop offset="0" stop-color="#000" stop-opacity="0"/><stop offset="1" stop-color="#000" stop-opacity="0.04"/></linearGradient></defs>
<rect x="1452" y="1589.5" width="772" height="2.5" fill="#000" fill-opacity="0.035"/><rect x="2232" y="1589.5" width="712" height="2.5" fill="#000" fill-opacity="0.035"/>
<path d="M1452,1592H2224V1644Q2224,1652 2216,1652H1460Q1452,1652 1452,1644Z" fill="#ffffff"/>
<path d="M2232,1592H2944V1644Q2944,1652 2936,1652H2240Q2232,1652 2232,1644Z" fill="#ffffff"/>
<circle cx="2189" cy="1617" r="11" stroke="#7d7d7d" stroke-width="3.8" fill="none"/><path d="M2197.5,1626L2209.5,1637.5" stroke="#7d7d7d" stroke-width="4.4"/>
<circle cx="2909" cy="1617" r="11" stroke="#7d7d7d" stroke-width="3.8" fill="none"/><path d="M2917.5,1626L2929.5,1637.5" stroke="#7d7d7d" stroke-width="4.4"/>
<g transform="translate(84,124)"><rect x="8" y="0" width="48" height="48" fill="#3c4a9c"/><rect x="12" y="4" width="40" height="3.6" fill="#ffffff"/><rect x="48" y="12" width="4" height="3.6" fill="#ffffff"/><rect x="48" y="20" width="4" height="3.6" fill="#ffffff"/><rect x="0" y="8" width="48" height="48" fill="#52b2e3"/><path d="M0,8H8L48,48V56H0Z" fill="#2e9fd0"/><rect x="4" y="12" width="40" height="3.6" fill="#ffffff"/><rect x="4" y="20" width="40" height="3.6" fill="#ffffff"/><rect x="4" y="28" width="40" height="3.6" fill="#ffffff"/><rect x="4" y="36" width="24" height="3.6" fill="#e6e6e6"/></g>
<g transform="translate(160,124)"><rect x="0" y="0" width="56" height="56" fill="#3c4a9c"/><path d="M0,0L56,56H0Z" fill="#26388a" opacity="0.7"/><rect x="4" y="16" width="48" height="36" fill="#52b2e3"/><path d="M4,16H16L52,52H4Z" fill="#2e9fd0"/><rect x="32" y="8" width="8" height="4" fill="#ffffff"/><rect x="44" y="4" width="4" height="4" fill="#52b2e3"/><rect x="48" y="4" width="4" height="4" fill="#ffffff"/><rect x="44" y="8" width="4" height="4" fill="#ffffff"/><rect x="48" y="8" width="4" height="4" fill="#52b2e3"/></g>
<g transform="translate(250.3,123.4)"><circle cx="28" cy="28" r="28" fill="#42b2e2"/><path d="M8.2,47.8A28,28 0 0 0 47.8,47.8Z" fill="#2e9fd0"/><circle cx="28" cy="28" r="24" fill="#3c4a9c"/><path d="M11,11A24,24 0 0 0 45,45Z" fill="#2a3784"/><path d="M16,11.5L48,28L16,44Z" fill="#ffffff"/><path d="M16,17L33.5,34L16,44Z" fill="#e4e4e4"/></g>
<g transform="translate(326,124)"><rect x="12" y="16" width="32" height="36" fill="#34429a"/><rect x="16" y="20" width="24" height="28" fill="#52b2e3"/><path d="M16,20L40,44V48H16Z" fill="#2e9fd0"/><rect x="20" y="8" width="16" height="8" fill="#34429a"/><rect x="20" y="0" width="4" height="8" fill="#34429a"/><rect x="32" y="0" width="4" height="8" fill="#34429a"/><rect x="0" y="20" width="12" height="4" fill="#34429a"/><rect x="0" y="32" width="12" height="4" fill="#34429a"/><rect x="0" y="44" width="12" height="4" fill="#34429a"/><rect x="0" y="12" width="4" height="12" fill="#34429a"/><rect x="0" y="44" width="4" height="12" fill="#34429a"/><rect x="44" y="20" width="12" height="4" fill="#34429a"/><rect x="44" y="32" width="12" height="4" fill="#34429a"/><rect x="44" y="44" width="12" height="4" fill="#34429a"/><rect x="52" y="12" width="4" height="12" fill="#34429a"/><rect x="52" y="44" width="4" height="12" fill="#34429a"/></g>
<g transform="translate(2150,124)"><path d="M0,0H40L56,16V56H0Z" fill="#66abce"/><path d="M0,0L56,56H0Z" fill="#4d94b9"/><path d="M40,0L56,16H40Z" fill="#2c1f84"/><path d="M18,22L28,16L38,22L28,28Z" fill="#ffffff"/><path d="M18,22L28,28V40L18,34Z" fill="#150d6c"/></g>
<g transform="translate(2226,124)"><path d="M0,0H40L56,16V56H0Z" fill="#66abce"/><path d="M0,0L56,56H0Z" fill="#4d94b9"/><path d="M40,0L56,16H40Z" fill="#2c1f84"/><path d="M18,14L28,8L38,14L28,20Z" fill="#ffffff"/><path d="M18,14L28,20V32L18,26Z" fill="#150d6c"/><path d="M8,31.7L18,25.7L28,31.7L18,37.7Z" fill="#e6e6e6"/><path d="M8,31.7L18,37.7V49.7L8,43.7Z" fill="#150d6c"/><path d="M28,31.7L38,25.7L48,31.7L38,37.7Z" fill="#ffffff"/><path d="M28,31.7L38,37.7V49.7L28,43.7Z" fill="#150d6c"/></g>
<g transform="translate(2302,124)"><rect x="0" y="0" width="56" height="56" fill="#52b2e3"/><path d="M0,0L56,56H0Z" fill="#2e9fd0"/><path d="M20,36L23,26L44,5L51,12L30,33Z" fill="#3c4a9c"/><path d="M39,10L46,17" stroke="#52b2e3" stroke-width="2"/><path d="M25,24L32,31" stroke="#52b2e3" stroke-width="2"/><rect x="4" y="40.4" width="47.6" height="3.5" fill="#e6e6e6"/><rect x="4" y="48.2" width="36" height="3.5" fill="#e6e6e6"/></g>
<g transform="translate(2378,124)"><rect x="0" y="0" width="56" height="56" fill="#3c4a9c"/><path d="M0,0L56,56H0Z" fill="#26388a" opacity="0.6"/><rect x="4" y="4" width="48" height="8" fill="#52b2e3"/><rect x="4" y="16" width="16" height="4" fill="#2e9fd0"/><rect x="24" y="16" width="28" height="4" fill="#ffffff"/><rect x="4" y="24" width="16" height="4" fill="#2e9fd0"/><rect x="24" y="24" width="28" height="4" fill="#ffffff"/><rect x="4" y="32" width="16" height="4" fill="#2e9fd0"/><rect x="24" y="32" width="28" height="4" fill="#ffffff"/><rect x="4" y="40" width="16" height="4" fill="#2e9fd0"/><rect x="24" y="40" width="28" height="4" fill="#ffffff"/><rect x="4" y="48" width="16" height="4" fill="#2e9fd0"/><rect x="24" y="48" width="28" height="4" fill="#ffffff"/></g>
<g transform="translate(2454,124)"><rect x="16" y="0" width="40" height="40" fill="#3c4a9c"/><rect x="8" y="8" width="40" height="40" fill="#52b2e3"/><path d="M0,16H40V56H8L0,48Z" fill="#3c4a9c"/><path d="M0,16H16L40,40V56H8L0,48Z" fill="#26388a"/><path d="M0,48H8V56Z" fill="#2e9fd0"/></g>
<rect x="2526" y="120" width="2" height="64" fill="#c9c9c9"/>
<g transform="translate(2544,124)"><path d="M0,20L19.2,0V12H40.8L56,28H19.2V40Z" fill="#a1a1a1"/><path d="M0,20L8,12L24,28H19.2V40Z" fill="#8b8b8b"/><path d="M40,28H56V56L40,40Z" fill="#4a4a4a"/></g>
<g transform="translate(2620,124)"><path d="M0,0L16,16V28H0Z" fill="#343434"/><path d="M0,28H36V16L56,36L36,56V44H16Z" fill="#a1a1a1"/><path d="M0,28H36V44H16Z" fill="#8b8b8b"/><path d="M36,44V56L46,46Z" fill="#8b8b8b"/></g>
<rect x="2692" y="120" width="2" height="64" fill="#c9c9c9"/>
<g transform="translate(2710,124)"><rect x="0" y="0" width="48" height="48" fill="#a2a2a2"/><path d="M0,0L48,48H0Z" fill="#8f8f8f"/><rect x="12" y="4" width="8" height="4" fill="#ffffff"/><rect x="24" y="4" width="8" height="4" fill="#ffffff"/><rect x="36" y="4" width="8" height="4" fill="#ffffff"/><rect x="4" y="4" width="4" height="8" fill="#ffffff"/><rect x="4" y="16" width="4" height="8" fill="#ffffff"/><rect x="4" y="28" width="4" height="8" fill="#ffffff"/><rect x="4" y="40" width="4" height="4" fill="#ffffff"/><rect x="12" y="40" width="8" height="4" fill="#ffffff"/><rect x="24" y="40" width="8" height="4" fill="#ffffff"/><rect x="40" y="12" width="4" height="8" fill="#ffffff"/><circle cx="40" cy="40" r="16" fill="#353535"/><path d="M28.7,28.7A16,16 0 0 1 51.3,51.3Z" fill="#4b4b4b"/><rect x="28" y="36" width="24" height="8" fill="#ffffff"/><path d="M28,36H36L40,44H28Z" fill="#e6e6e6"/></g>
<rect x="2782" y="120" width="2" height="64" fill="#c9c9c9"/>
<g transform="translate(2800,124)"><rect x="0" y="0" width="56" height="56" fill="#52b2e3"/><path d="M0,0L56,56H0Z" fill="#2e9fd0"/><rect x="8" y="4" width="4" height="48" fill="#2f3a8e"/><rect x="4" y="8" width="48" height="4" fill="#2f3a8e"/><rect x="20" y="4" width="4" height="48" fill="#2f3a8e"/><rect x="4" y="20" width="48" height="4" fill="#2f3a8e"/><rect x="32" y="4" width="4" height="48" fill="#2f3a8e"/><rect x="4" y="32" width="48" height="4" fill="#2f3a8e"/><rect x="44" y="4" width="4" height="48" fill="#2f3a8e"/><rect x="4" y="44" width="48" height="4" fill="#2f3a8e"/></g>
<g transform="translate(2876,124)"><path d="M38,38L52,52" stroke="#44b3e3" stroke-width="9" stroke-linecap="butt"/><circle cx="24" cy="24" r="21.5" fill="#ffffff" stroke="#44b3e3" stroke-width="5"/><path d="M8.8,8.8A21.5,21.5 0 0 0 39.2,39.2Z" fill="#e9e9ec" /><path d="M10,16H18V32H14V20H10Z" fill="#27308a"/><rect x="22.5" y="17" width="3.7" height="3.7" fill="#27308a"/><rect x="22.5" y="28" width="3.7" height="3.7" fill="#27308a"/><path d="M29.5,16H38.4V32H34.4V20H29.5Z" fill="#27308a"/></g>
<rect x="234" y="108" width="88" height="85" stroke="#fe2b1c" stroke-width="6" fill="none"/>
<rect x="864" y="193" width="264" height="67" stroke="#fe2b1c" stroke-width="6" fill="none"/>
</g>
</svg>
<div id="toast"></div>
<svg class="tx" width="3016" height="1736" viewBox="0 0 3016 1736">
<text x="943.88" y="88.00" font-size="27.5" font-weight="bold" fill="#a6a8a8" textLength="1124.81" lengthAdjust="spacingAndGlyphs">GDevelop 5 - /Users/dkarakay/Documents/GDevelop projects/space-shooter/game.json</text>
<text x="87.85" y="238.00" font-size="32" fill="#878787" textLength="140.17" lengthAdjust="spacingAndGlyphs" stroke="#878787" stroke-width="0.35">Start Page</text>
<text x="267.59" y="238.00" font-size="32" fill="#878787" textLength="158.72" lengthAdjust="spacingAndGlyphs" stroke="#878787" stroke-width="0.35">Base Scene</text>
<text x="518.62" y="238.00" font-size="32" fill="#878787" textLength="272.88" lengthAdjust="spacingAndGlyphs" stroke="#878787" stroke-width="0.35">Base Scene (Events)</text>
<text x="885.56" y="238.00" font-size="32" fill="#ffffff" textLength="166.76" lengthAdjust="spacingAndGlyphs" stroke="#ffffff" stroke-width="0.35">Menu Scene</text>
<text x="1144.59" y="238.00" font-size="32" fill="#878787" textLength="282.74" lengthAdjust="spacingAndGlyphs" stroke="#878787" stroke-width="0.35">Menu Scene (Events)</text>
<text x="81.30" y="1634.00" font-size="32" fill="#e2e2e2" textLength="110.04" lengthAdjust="spacingAndGlyphs" stroke="#e2e2e2" stroke-width="0.35">466;433</text>
<text x="1481.55" y="298.20" font-size="32" fill="#ffffff" textLength="103.55" lengthAdjust="spacingAndGlyphs" stroke="#ffffff" stroke-width="0.35">Objects</text>
<text x="2260.97" y="298.20" font-size="32" fill="#ffffff" textLength="194.11" lengthAdjust="spacingAndGlyphs" stroke="#ffffff" stroke-width="0.35">Object Groups</text>
<text x="1595.56" y="357.70" font-size="28.8" fill="#1d1d1d" textLength="152.18" lengthAdjust="spacingAndGlyphs" stroke="#1d1d1d" stroke-width="0.35">Background</text>
<text x="1595.74" y="421.70" font-size="28.8" fill="#1d1d1d" textLength="77.54" lengthAdjust="spacingAndGlyphs" stroke="#1d1d1d" stroke-width="0.35">Level1</text>
<text x="1595.59" y="485.70" font-size="28.8" fill="#1d1d1d" textLength="83.13" lengthAdjust="spacingAndGlyphs" stroke="#1d1d1d" stroke-width="0.35">Level2</text>
<text x="1595.57" y="549.70" font-size="28.8" fill="#1d1d1d" textLength="83.68" lengthAdjust="spacingAndGlyphs" stroke="#1d1d1d" stroke-width="0.35">Level3</text>
<text x="1596.52" y="613.70" font-size="28.8" fill="#1d1d1d" textLength="143.71" lengthAdjust="spacingAndGlyphs" stroke="#1d1d1d" stroke-width="0.35">Gamename</text>
<text x="1713.54" y="678.00" font-size="30" fill="#737373" textLength="217.06" lengthAdjust="spacingAndGlyphs" stroke="#737373" stroke-width="0.35">Add a new object</text>
<text x="2262.18" y="356.00" font-size="28.8" fill="#1d1d1d" textLength="81.64" lengthAdjust="spacingAndGlyphs" stroke="#1d1d1d" stroke-width="0.35">Levels</text>
<text x="2445.25" y="417.00" font-size="30" fill="#737373" textLength="254.15" lengthAdjust="spacingAndGlyphs" stroke="#737373" stroke-width="0.35">Click to add a group</text>
<text x="1467.99" y="1630.00" font-size="32" fill="#979797" textLength="98.32" lengthAdjust="spacingAndGlyphs" stroke="#979797" stroke-width="0.35">Search</text>
<text x="2247.59" y="1630.00" font-size="32" fill="#979797" textLength="98.32" lengthAdjust="spacingAndGlyphs" stroke="#979797" stroke-width="0.35">Search</text>
<text x="1218.04" y="1566.00" font-size="29" fill="#ffffff" textLength="286.82" lengthAdjust="spacingAndGlyphs" stroke="#ffffff" stroke-width="0.35">Project properly saved</text>
</svg>
</body></html>
